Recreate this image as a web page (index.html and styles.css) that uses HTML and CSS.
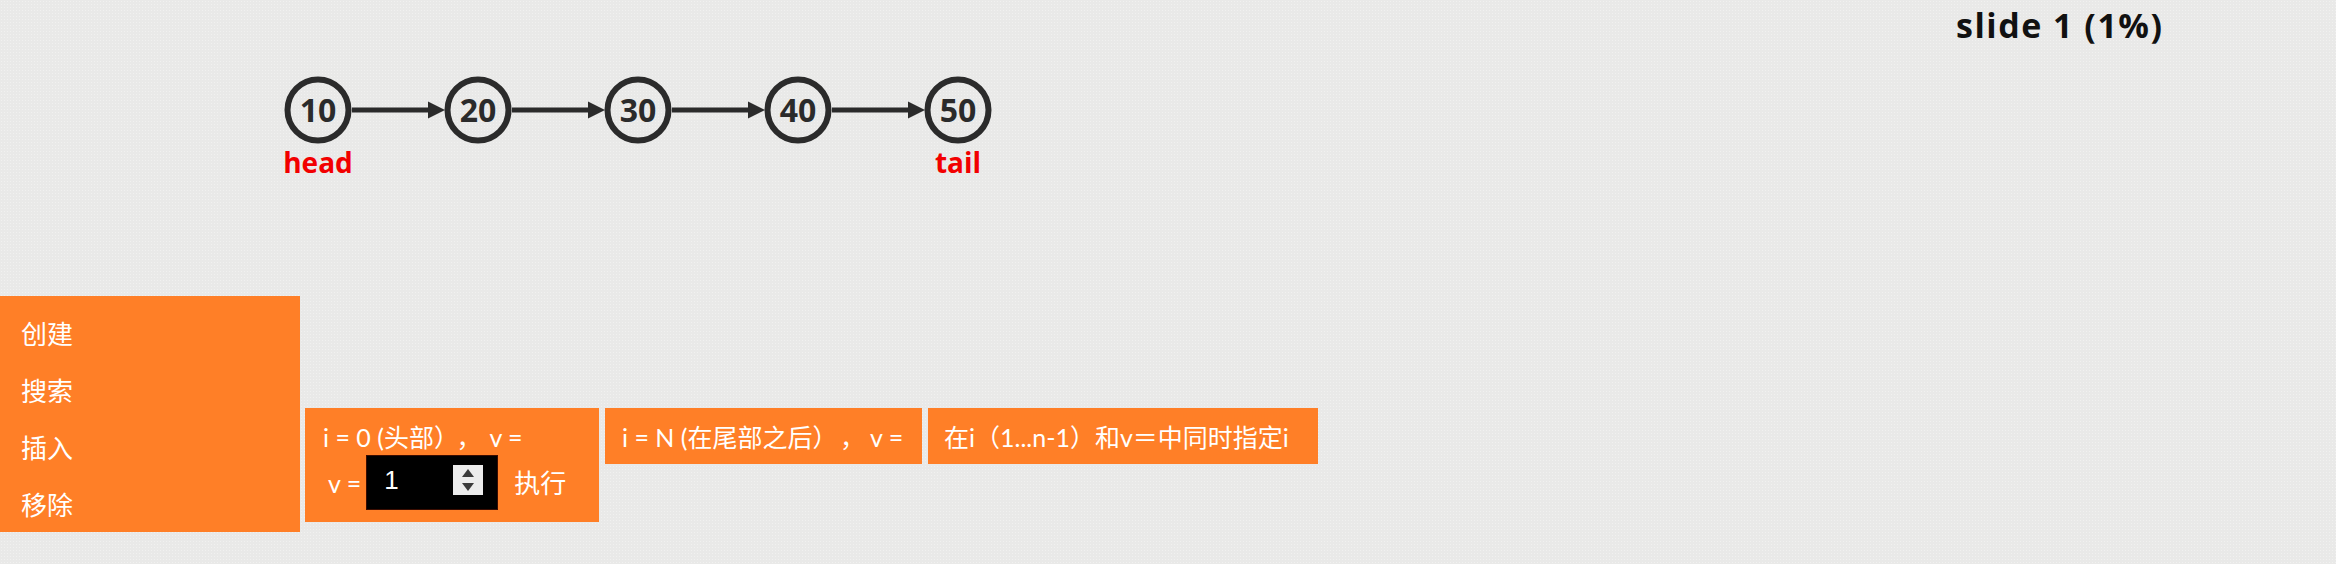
FILE: index.html
```html
<!DOCTYPE html>
<html lang="zh-CN">
<head>
<meta charset="utf-8">
<title>Linked List</title>
<link rel="stylesheet" href="styles.css">
</head>
<body>
<div class="stage">
  <div class="slide-label">slide 1 (1%)</div>
  <svg class="diagram" width="2336" height="296" viewBox="0 0 2336 296" xmlns="http://www.w3.org/2000/svg">
    <g class="edges">
      <line x1="352" y1="110" x2="432" y2="110"/>
      <polygon points="445,110 428,101.5 428,118.5"/>
      <line x1="512" y1="110" x2="592" y2="110"/>
      <polygon points="605,110 588,101.5 588,118.5"/>
      <line x1="672" y1="110" x2="752" y2="110"/>
      <polygon points="765,110 748,101.5 748,118.5"/>
      <line x1="832" y1="110" x2="912" y2="110"/>
      <polygon points="925,110 908,101.5 908,118.5"/>
    </g>
    <g class="nodes">
      <circle cx="318" cy="110" r="30.5"/>
      <circle cx="478" cy="110" r="30.5"/>
      <circle cx="638" cy="110" r="30.5"/>
      <circle cx="798" cy="110" r="30.5"/>
      <circle cx="958" cy="110" r="30.5"/>
    </g>
    <g class="values">
      <text x="318" y="122">10</text>
      <text x="478" y="122">20</text>
      <text x="638" y="122">30</text>
      <text x="798" y="122">40</text>
      <text x="958" y="122">50</text>
    </g>
    <g class="tags">
      <text x="318" y="173">head</text>
      <text x="958" y="173">tail</text>
    </g>
  </svg>
</div>
<div class="controls">
  <div class="menu">
    <div class="menu-item">创建</div>
    <div class="menu-item">搜索</div>
    <div class="menu-item">插入</div>
    <div class="menu-item">移除</div>
  </div>
  <div class="actions">
    <div class="action action-head">
      <div class="action-line"><span>i = 0 (头部）</span><span class="comma">，</span><span class="v-label">v =</span></div>
      <div class="action-row">
        <span class="row-label">v =</span>
        <div class="num-input">
          <span class="num-value">1</span>
          <span class="spinner">
            <svg width="30" height="30" viewBox="0 0 30 30" xmlns="http://www.w3.org/2000/svg">
              <polygon points="15,4 21,12 9,12" fill="#3a3a3a"/>
              <polygon points="9,18 21,18 15,26" fill="#3a3a3a"/>
            </svg>
          </span>
        </div>
        <span class="go">执行</span>
      </div>
    </div>
    <div class="action action-tail">
      <div class="action-line"><span>i = N (在尾部之后）</span><span class="comma tail-comma">，</span><span class="v-label tail-v">v =</span></div>
    </div>
    <div class="action action-mid">
      <div class="action-line">在i（1...n-1）和v＝中同时指定i</div>
    </div>
  </div>
</div>
</body>
</html>
```
FILE: styles.css
```css
html, body {
  margin: 0;
  padding: 0;
}
body {
  width: 2336px;
  height: 564px;
  overflow: hidden;
  background-color: #e9e9e8;
  background-image: radial-gradient(circle, #f1f1f0 0.6px, transparent 0.9px);
  background-size: 3px 3px;
  font-family: "Lato", "Noto Sans CJK SC", sans-serif;
}
.stage {
  position: relative;
  height: 296px;
}
.diagram {
  display: block;
}
.slide-label {
  position: absolute;
  top: 5px;
  left: 1956px;
  font-family: "Open Sans", sans-serif;
  font-weight: 700;
  font-size: 34px;
  line-height: 40px;
  letter-spacing: 1.5px;
  color: #111;
  white-space: nowrap;
}
.edges line {
  stroke: #2b2b2b;
  stroke-width: 5;
}
.edges polygon {
  fill: #2b2b2b;
}
.nodes circle {
  fill: none;
  stroke: #2b2b2b;
  stroke-width: 6;
}
.values text {
  font-family: "Open Sans", sans-serif;
  font-weight: 700;
  font-size: 32px;
  fill: #2b2b2b;
  text-anchor: middle;
}
.tags text {
  font-family: "Open Sans", sans-serif;
  font-weight: 700;
  font-size: 28px;
  fill: #f20000;
  text-anchor: middle;
}
.controls {
  display: flex;
  align-items: flex-start;
}
.menu {
  box-sizing: border-box;
  width: 300px;
  height: 236px;
  padding: 10px 0 0 21px;
  background: #ff7f27;
  color: #fff;
}
.menu-item {
  font-size: 26px;
  line-height: 57px;
}
.actions {
  display: flex;
  align-items: flex-start;
  gap: 6px;
  margin-top: 112px;
  margin-left: 5px;
}
.action {
  box-sizing: border-box;
  background: #ff7f27;
  color: #fff;
  padding: 14px 0 12px 17px;
  font-size: 25px;
  line-height: 30px;
  white-space: nowrap;
  overflow: hidden;
}
.action-head {
  width: 294px;
  padding-left: 18px;
}
.action-tail {
  width: 317px;
}
.action-mid {
  width: 390px;
  padding-left: 16px;
}
.comma {
  margin-left: 10px;
}
.v-label {
  margin-left: 8px;
}
.tail-comma {
  margin-left: 15px;
}
.tail-v {
  margin-left: 5px;
}
.action-row {
  display: flex;
  align-items: center;
  margin-top: 3px;
}
.row-label {
  margin-left: 5px;
}
.num-input {
  box-sizing: border-box;
  display: flex;
  align-items: center;
  justify-content: space-between;
  width: 132px;
  height: 55px;
  margin-left: 5px;
  padding: 0 14px 0 17px;
  background: #000;
  border: 1px solid #3a0c00;
}
.num-value {
  font-family: "Liberation Sans", sans-serif;
  font-size: 26px;
  line-height: 30px;
  padding-bottom: 6px;
  color: #fff;
}
.spinner {
  display: block;
  width: 30px;
  height: 30px;
  margin-top: -5px;
  background: #ececec;
}
.spinner svg {
  display: block;
}
.go {
  margin-left: 16px;
  font-size: 26px;
}
```
